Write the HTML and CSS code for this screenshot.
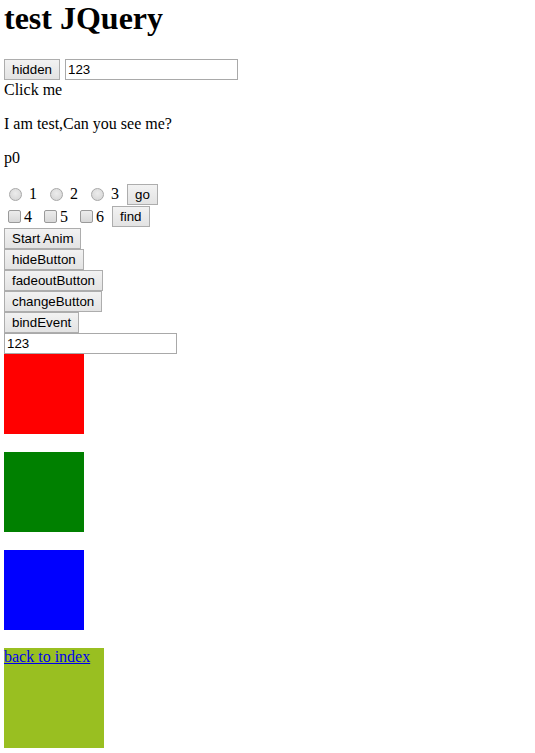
FILE: index.html
```html
<!DOCTYPE html>
<html>
<head>
<meta charset="utf-8">
<title>test JQuery</title>
<link rel="stylesheet" href="styles.css">
</head>
<body>
<h1 class="title">test JQuery</h1>
<div class="row row-top">
  <button class="btn">hidden</button>
  <input class="field field-top" type="text" value="123">
</div>
<div class="line">Click me</div>
<p class="para">I am test,Can you see me?</p>
<p class="para">p0</p>
<div class="row row-radio">
  <span class="opt opt-radio"><input class="radio" type="radio" name="r"> 1</span>
  <span class="opt opt-radio"><input class="radio" type="radio" name="r"> 2</span>
  <span class="opt opt-radio"><input class="radio" type="radio" name="r"> 3</span>
  <button class="btn">go</button>
</div>
<div class="row row-check">
  <span class="opt opt-check"><input class="check" type="checkbox">4</span>
  <span class="opt opt-check"><input class="check" type="checkbox">5</span>
  <span class="opt opt-check"><input class="check" type="checkbox">6</span>
  <button class="btn">find</button>
</div>
<div class="stack">
  <button class="btn">Start Anim</button>
  <button class="btn">hideButton</button>
  <button class="btn">fadeoutButton</button>
  <button class="btn">changeButton</button>
  <button class="btn">bindEvent</button>
  <input class="field" type="text" value="123">
</div>
<div class="box box-red"></div>
<div class="box box-green"></div>
<div class="box box-blue"></div>
<div class="box box-olive"><a class="link" href="#">back to index</a></div>
</body>
</html>
```
FILE: styles.css
```css
html, body {
  background: #fff;
}
body {
  margin: 0 4px;
  font-family: "Liberation Serif", "Times New Roman", serif;
  font-size: 16px;
  color: #000;
}
.title {
  font-size: 32px;
  font-weight: bold;
  margin: 0 0 22.44px 0;
}
.row {
  display: flex;
  align-items: center;
}
.row-top {
  height: 21px;
  gap: 5px;
}
.btn {
  box-sizing: border-box;
  height: 21px;
  margin: 0;
  padding: 0 7px;
  font-family: "Liberation Sans", Arial, sans-serif;
  font-size: 13.333px;
  color: #000;
  border: 1px solid #adadad;
  border-radius: 0;
  background: linear-gradient(#f2f2f2, #e3e3e3);
  line-height: 19px;
}
.field {
  box-sizing: border-box;
  width: 173px;
  height: 21px;
  margin: 0;
  padding: 1px 2px;
  border: 1px solid #a9a9a9;
  font-family: "Liberation Sans", Arial, sans-serif;
  font-size: 13.333px;
  color: #000;
  background: #fff;
  outline: none;
}
.line {
  padding-top: 1px;
  line-height: normal;
}
.para {
  margin: 16px 0;
}
.row-radio {
  height: 22px;
}
.row-check {
  height: 23px;
}
.opt {
  display: inline-flex;
  align-items: center;
  white-space: pre;
}
.opt-radio {
  width: 41px;
}
.opt-check {
  width: 36px;
}
.radio {
  appearance: none;
  -webkit-appearance: none;
  box-sizing: border-box;
  width: 13px;
  height: 13px;
  margin: 0 3px 0 5px;
  border: 1px solid #a8a8a8;
  border-radius: 50%;
  background: radial-gradient(circle at 50% 40%, #ececec, #d2d2d2);
}
.check {
  appearance: none;
  -webkit-appearance: none;
  box-sizing: border-box;
  width: 13px;
  height: 13px;
  margin: 0 3px 0 4px;
  border: 1px solid #9a9a9a;
  border-radius: 2px;
  background: linear-gradient(#ececec, #d8d8d8);
}
.stack {
  display: flex;
  flex-direction: column;
  align-items: flex-start;
}
.box {
  width: 80px;
  height: 80px;
  margin-bottom: 18px;
}
.box-red { background: #ff0000; }
.box-green { background: #008000; }
.box-blue { background: #0000ff; }
.box-olive {
  width: 100px;
  height: 100px;
  background: #99bf21;
  margin-bottom: 0;
}
.link {
  color: #0000ee;
  text-decoration: underline;
}
```
